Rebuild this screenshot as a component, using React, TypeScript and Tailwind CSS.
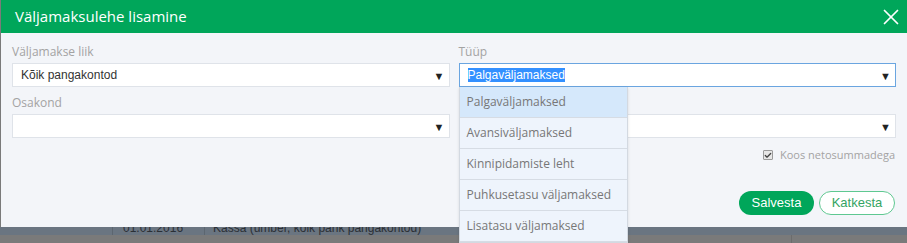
import React from 'react';
import { X, Check } from 'lucide-react';

const types = [
  'Palgaväljamaksed',
  'Avansiväljamaksed',
  'Kinnipidamiste leht',
  'Puhkusetasu väljamaksed',
  'Lisatasu väljamaksed',
];

function Arrow() {
  return <span className="text-[11px] leading-none text-[#222]">▼</span>;
}

function SelectBox({
  children,
  focused = false,
}: {
  children?: React.ReactNode;
  focused?: boolean;
}) {
  return (
    <div
      className={`flex h-[24px] items-center justify-between bg-white pl-[8px] pr-[4px] border ${
        focused ? 'border-[#6aa5e0]' : 'border-[#dfe3e9]'
      }`}
    >
      <div className="text-[12px] text-[#333] font-['Liberation_Sans',Arial,sans-serif]">
        {children}
      </div>
      <Arrow />
    </div>
  );
}

function Label({ children }: { children: React.ReactNode }) {
  return (
    <div className="h-[16px] text-[12px] leading-[16px] text-[#a3a3a3] mb-[3px]">
      {children}
    </div>
  );
}

export default function App() {
  return (
    <div className="w-[907px] h-[243px] overflow-hidden bg-[#7a7a7a] font-['Open_Sans',sans-serif]">
      <div className="relative ml-[1px] h-[227px] bg-[#f3f5f9] flex flex-col">
        <header className="flex h-[33px] shrink-0 items-center justify-between bg-[#00a65a] pl-[14px] pr-[3px]">
          <h1 className="text-[15px] text-white">Väljamaksulehe lisamine</h1>
          <X size={26} strokeWidth={1.6} className="text-white" />
        </header>

        <div className="flex flex-col px-[11px] pt-[11px]">
          <div className="grid grid-cols-2 gap-x-[9px]">
            <div>
              <Label>Väljamakse liik</Label>
              <SelectBox>Kõik pangakontod</SelectBox>
            </div>
            <div className="relative">
              <Label>Tüüp</Label>
              <SelectBox focused>
                <span className="bg-[#3390ff] text-white">Palgaväljamaksed</span>
              </SelectBox>
              <ul className="absolute left-0 top-full z-10 w-[169px] border border-[#d3d9e1] border-t-0 bg-[#eef4fc] shadow-sm">
                {types.map((t, i) => (
                  <li
                    key={t}
                    className={`flex h-[31px] items-center pl-[7px] text-[12px] text-[#777] border-b border-[#d6dce4] ${
                      i === 0 ? 'bg-[#d5e8fb]' : ''
                    }`}
                  >
                    {t}
                  </li>
                ))}
              </ul>
            </div>
          </div>

          <div className="grid grid-cols-2 gap-x-[9px] mt-[8px]">
            <div>
              <Label>Osakond</Label>
              <SelectBox />
            </div>
            <div>
              <div className="h-[16px] mb-[3px]" />
              <SelectBox />
            </div>
          </div>

          <div className="flex h-[14px] items-center justify-end gap-[7px] mt-[10px] pr-[1px]">
            <span className="flex h-[10px] w-[10px] items-center justify-center rounded-[1px] border border-[#9a9a9a] bg-[#e6e6e6]">
              <Check size={9} strokeWidth={4} className="text-[#444]" />
            </span>
            <span className="text-[11px] text-[#a3a3a3]">Koos netosummadega</span>
          </div>

          <div className="flex justify-end gap-[5px] mt-[29px] pr-[1px] font-['Liberation_Sans',Arial,sans-serif]">
            <button className="h-[24px] w-[75px] rounded-full bg-[#00a65a] text-[13px] text-white">
              Salvesta
            </button>
            <button className="h-[24px] w-[76px] rounded-full border border-[#5fc891] bg-white text-[13px] text-[#35a463]">
              Katkesta
            </button>
          </div>
        </div>
      </div>

      <div className="flex h-[8px] overflow-hidden bg-[#6a7581] text-[12px] text-[#2a2f35] font-['Liberation_Sans',Arial,sans-serif]">
        <div className="w-[113px] border-r border-[#5c6670]" />
        <div className="w-[92px] border-r border-[#5c6670] pl-[10px]">
          <div className="-mt-[8px]">01.01.2016</div>
        </div>
        <div className="flex-1 pl-[8px]">
          <div className="-mt-[8px]">Kassa (ümber, kõik pank pangakontod)</div>
        </div>
      </div>
      <div className="flex h-[8px]">
        <div className="w-[792px] border-r border-[#6c6c6c]" />
      </div>
    </div>
  );
}
